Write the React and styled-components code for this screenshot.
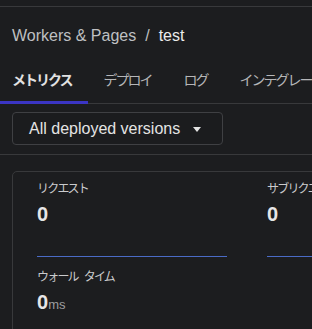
import React from "react";
import styled, { createGlobalStyle } from "styled-components";

const GlobalStyle = createGlobalStyle`
  body {
    margin: 0;
    background: #1c1d1f;
    overflow: hidden;
    font-family: "Liberation Sans", "Noto Sans CJK JP", sans-serif;
  }
`;

const Page = styled.div`
  width: 100%;
  min-height: 329px;
  background: #1c1d1f;
  color: #e4e4e4;
`;

const TopRule = styled.div`
  height: 6px;
  border-bottom: 1px solid #38393b;
`;

const Breadcrumb = styled.div`
  margin-top: 19px;
  padding-left: 12px;
  font-size: 16px;
  line-height: 20px;
  white-space: nowrap;
  display: flex;
`;

const Crumb = styled.span`
  color: ${({ current }) => (current ? "#ececec" : "#bfc0c2")};
`;

const Slash = styled.span`
  color: #bfc0c2;
  margin: 0 9px;
`;

const TabBar = styled.div`
  margin-top: 10px;
  display: flex;
  border-bottom: 1px solid #38393b;
  white-space: nowrap;
`;

const Tab = styled.div`
  padding: 13px 16px 12px ${({ first }) => (first ? "12px" : "16px")};
  margin-bottom: -1px;
  font-family: "Noto Sans CJK JP", sans-serif;
  font-size: 14px;
  line-height: 20px;
  letter-spacing: -2px;
  font-weight: ${({ active }) => (active ? 700 : 400)};
  color: ${({ active }) => (active ? "#e2e2e2" : "#b5b6b8")};
  border-bottom: 3px solid ${({ active }) => (active ? "#3b35c4" : "transparent")};
`;

const FilterRow = styled.div`
  padding: 8px 12px 9px;
  border-bottom: 1px solid #38393b;
`;

const Select = styled.div`
  display: inline-flex;
  align-items: center;
  gap: 13px;
  height: 31px;
  padding: 0 21px 0 16px;
  border: 1px solid #3f4043;
  border-radius: 4px;
  background: #1b1c1e;
  font-size: 16px;
  color: #e4e4e4;
  white-space: nowrap;
`;

const Caret = styled.span`
  width: 0;
  height: 0;
  border-left: 4.5px solid transparent;
  border-right: 4.5px solid transparent;
  border-top: 5px solid #e4e4e4;
  margin-top: 1px;
`;

const Card = styled.div`
  margin: 16px 0 0 12px;
  width: 1000px;
  border: 1px solid #38393b;
  border-radius: 5px;
  padding: 8px 24px 24px;
`;

const MetricGrid = styled.div`
  display: grid;
  grid-template-columns: repeat(4, 190px);
  column-gap: 40px;
  row-gap: 8px;
`;

const Metric = styled.div`
  display: flex;
  flex-direction: column;
`;

const Label = styled.div`
  font-family: "Noto Sans CJK JP", sans-serif;
  font-size: 12px;
  line-height: 16px;
  letter-spacing: -1.8px;
  word-spacing: 5px;
  color: #cacbcd;
  white-space: pre;
`;

const Value = styled.div`
  margin-top: 6px;
  font-size: 20px;
  line-height: 24px;
  font-weight: 700;
  color: #e6e6e6;
`;

const Unit = styled.span`
  font-size: 13px;
  font-weight: 400;
  color: #9c9d9f;
`;

const Spark = styled.svg`
  display: block;
  width: 190px;
  height: 31px;
`;

const metrics = [
  { label: "リクエスト", value: "0" },
  { label: "サブリクエスト", value: "0" },
  { label: "エラー", value: "0" },
  { label: "CPU 時間", value: "0", unit: "ms" },
  { label: "ウォール タイム", value: "0", unit: "ms", noChart: true },
];

const tabs = ["メトリクス", "デプロイ", "ログ", "インテグレーション", "設定"];

export default function App() {
  return (
    <Page>
      <GlobalStyle />
      <TopRule />
      <Breadcrumb>
        <Crumb>Workers &amp; Pages</Crumb>
        <Slash>/</Slash>
        <Crumb current>test</Crumb>
      </Breadcrumb>
      <TabBar>
        {tabs.map((t, i) => (
          <Tab key={t} first={i === 0} active={i === 0}>
            {t}
          </Tab>
        ))}
      </TabBar>
      <FilterRow>
        <Select>
          All deployed versions
          <Caret />
        </Select>
      </FilterRow>
      <Card>
        <MetricGrid>
          {metrics.map((m) => (
            <Metric key={m.label}>
              <Label>{m.label}</Label>
              <Value>
                {m.value}
                {m.unit && <Unit>{m.unit}</Unit>}
              </Value>
              {!m.noChart && (
                <Spark viewBox="0 0 190 31">
                  <line x1="0" y1="30.5" x2="190" y2="30.5" stroke="#4a6bc6" strokeWidth="1.2" />
                </Spark>
              )}
            </Metric>
          ))}
        </MetricGrid>
      </Card>
    </Page>
  );
}
